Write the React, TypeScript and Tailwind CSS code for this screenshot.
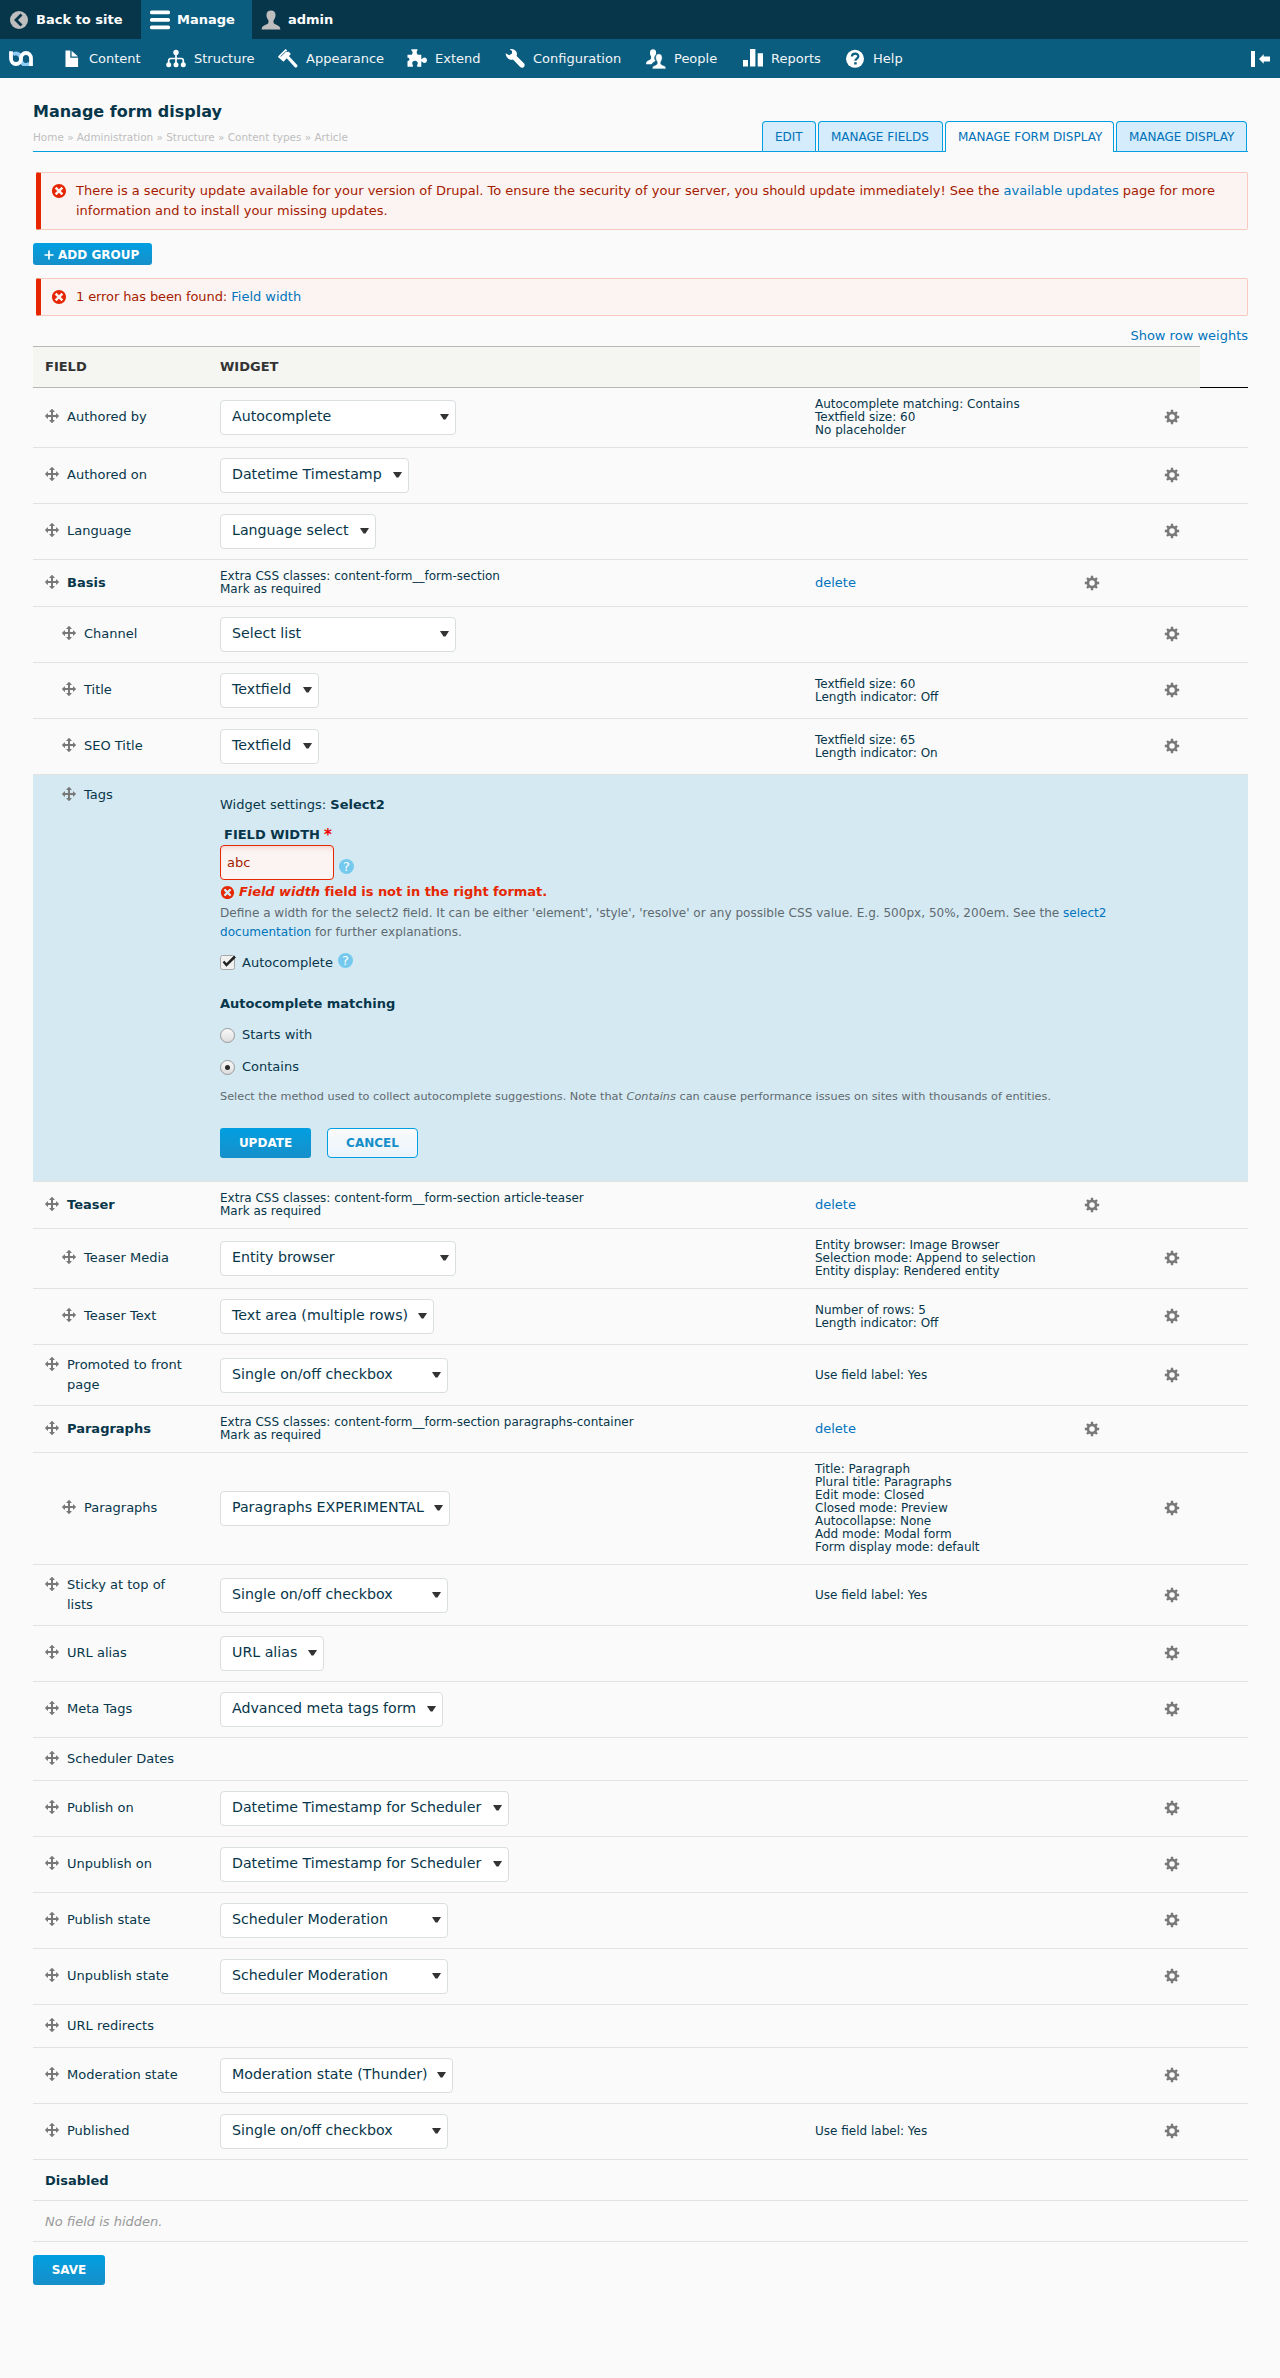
import React from "react";

const MOVE =
  "M14.904 7.753l-2.373-2.372c-.291-.292-.529-.193-.529.22v1.399h-3v-3h1.398c.414 0 .512-.239.221-.53l-2.371-2.372c-.137-.136-.36-.136-.497 0l-2.372 2.372c-.292.292-.193.53.22.53h1.399v3h-3v-1.369c0-.413-.239-.511-.53-.22l-2.372 2.372c-.136.136-.136.359 0 .494l2.372 2.372c.291.292.53.193.53-.221v-1.428h3v3h-1.4c-.413 0-.511.238-.22.529l2.374 2.373c.137.137.36.137.495 0l2.373-2.373c.29-.291.19-.529-.222-.529h-1.398v-3h3v1.4c0 .412.238.511.529.219l2.373-2.371c.137-.137.137-.359 0-.495z";
const ERR =
  "M8.002 1c-3.868 0-7.002 3.134-7.002 7s3.134 7 7.002 7c3.865 0 7-3.134 7-7s-3.135-7-7-7zm4.025 9.284c.062.063.1.149.1.239 0 .091-.037.177-.1.24l-1.262 1.262c-.064.062-.15.1-.24.1s-.176-.036-.24-.1l-2.283-2.283-2.286 2.283c-.064.062-.15.1-.24.1s-.176-.036-.24-.1l-1.261-1.262c-.063-.062-.1-.148-.1-.24 0-.088.036-.176.1-.238l2.283-2.285-2.283-2.284c-.063-.064-.1-.15-.1-.24s.036-.176.1-.24l1.262-1.262c.063-.063.149-.1.24-.1.089 0 .176.036.24.1l2.285 2.284 2.283-2.284c.064-.063.15-.1.24-.1s.176.036.24.1l1.262 1.262c.062.063.1.149.1.24 0 .089-.037.176-.1.24l-2.283 2.284 2.283 2.284z";

function Icon({ d, className }: { d: string; className: string }) {
  return (
    <svg viewBox="0 0 16 16" fill="currentColor" className={className}>
      <path d={d} />
    </svg>
  );
}

function Cog() {
  return (
    <svg viewBox="0 0 16 16" fill="none" stroke="currentColor" className="-mt-px block size-4 text-[#787878]">
      <circle cx="8" cy="8" r="4.1" strokeWidth="2.7" />
      <path
        d="M8 3.200V.8M8 12.800v2.400M3.200 8H.8M12.800 8h2.400M4.600 4.600 3 3M11.400 11.400 13 13M11.400 4.600 13 3M4.600 11.400 3 13"
        strokeWidth="2.400"
      />
    </svg>
  );
}

const menu: { label: string; w: string; icon: React.ReactNode }[] = [
  {
    label: "Content",
    w: "w-[105px]",
    icon: <path d="M4.500 1.400h4.800v7.300h7.800v9.200H4.500zM10.600 1.700l6.400 5.900h-6.400z" />,
  },
  {
    label: "Structure",
    w: "w-[112px]",
    icon: (
      <>
        <circle cx="10" cy="3.400" r="2.700" />
        <circle cx="2.700" cy="15.800" r="2.500" />
        <circle cx="10" cy="15.800" r="2.500" />
        <circle cx="17.300" cy="15.800" r="2.500" />
        <path d="M10 4v11M2.700 15v-3.500a2 2 0 0 1 2-2h10.600a2 2 0 0 1 2 2V15" fill="none" stroke="currentColor" strokeWidth="1.700" />
      </>
    ),
  },
  {
    label: "Appearance",
    w: "w-[129px]",
    icon: (
      <>
        <path d="M.2 7.200 7.600 0l1.600 1.400L7.800 3l3-.2 2.100 2.300-7.400 7.600-5.300-4.400z" />
        <path d="m9.200 7.500 8.600 9.400" stroke="currentColor" strokeWidth="3.200" strokeLinecap="round" />
        <path d="m2.600 7.600 5.200-5" stroke="#0b5d80" strokeWidth=".9" />
      </>
    ),
  },
  {
    label: "Extend",
    w: "w-[98px]",
    icon: (
      <path d="M4.400.2h6v1.400c-1 1-1 2.600.4 4.200h3.500v4.600c1.200-.4 1.600-1.800 3-1.800 1.600 0 2.700 1.200 2.700 2.700s-1.100 2.700-2.700 2.700c-1.400 0-1.800-1.300-3-1.700v5.500h-4.100c-.6-1.300.6-2.200.6-3.700 0-1.300-1.200-2.300-2.800-2.300s-2.800 1-2.800 2.300c0 1.500 1.200 2.400.6 3.700H.5V12c1 .2 1.900-.5 1.900-1.700S1.500 8.500.5 8.800V5.800h4.300C5.900 4.400 6 2.600 4.400 1.600z" />
    ),
  },
  {
    label: "Configuration",
    w: "w-[141px]",
    icon: (
      <path d="M.6 4.200 4.200 6.300 7 4.500V2L4.700.3c3-.7 6 .5 7 3.300.4 1.200.3 2.300-.1 3.300l7.300 7.300c1.200 1.200.9 3.100-.3 4-1 .8-2.400.7-3.400-.3L8 10.500c-3.500 1-7.200-1.700-7.400-6.300z" />
    ),
  },
  {
    label: "People",
    w: "w-[97px]",
    icon: (
      <>
        <path d="M4 3.200C4.200 1 5.300.2 7 .2s3 .8 3.100 3c.1 1.400-.2 2.600-1 3.500-1.400 1.200-1 4 .6 5.200-1.500.8-3.500 1.500-4 3.300H0c0-2.500 1.300-3.300 3-3.900 2.200-.8 2.600-2.900 1.700-4.600C4 5.700 3.900 4.500 4 3.200z" />
        <path
          d="M9.600 8.400c.1-2.400 1.200-3.600 3.200-3.600s3.300 1.200 3.400 3.600c.1 1.600-.3 2.800-1 3.900-.9 1.300-.5 3.200 1 3.700 2 .6 3.800 1 3.800 3.900H6.200c0-2.900 1.800-3.300 3.600-3.900 1.500-.5 1.800-2.500 1-3.700-.8-1.100-1.200-2.300-1.200-3.900z"
          stroke="#0b5d80"
          strokeWidth=".6"
        />
      </>
    ),
  },
  {
    label: "Reports",
    w: "w-[102px]",
    icon: <path d="M0 11h5v6.600H0zM7 0h5.400v17.600H7zM14.700 4.200H20v13.400h-5.300z" />,
  },
  {
    label: "Help",
    w: "w-[100px]",
    icon: (
      <>
        <circle cx="10" cy="9.800" r="9" />
        <path d="M6.900 7.500c.2-4 6.500-3.800 6.400-.1 0 2-2.900 2.300-2.900 4.300" fill="none" stroke="#0b5d80" strokeWidth="2.200" />
        <path d="M9.200 13.200h2.500v2.300H9.200z" fill="#0b5d80" />
      </>
    ),
  },
];

type Row = {
  label: string;
  h: string;
  group?: boolean;
  child?: boolean;
  select?: string;
  sw?: string;
  summary?: string[];
};

const before: Row[] = [
  { label: "Authored by", h: "h-[60px]", select: "Autocomplete", sw: "w-[236px]", summary: ["Autocomplete matching: Contains", "Textfield size: 60", "No placeholder"] },
  { label: "Authored on", h: "h-14", select: "Datetime Timestamp", sw: "w-[189px]" },
  { label: "Language", h: "h-14", select: "Language select", sw: "w-[156px]" },
  { label: "Basis", h: "h-[47px]", group: true, summary: ["Extra CSS classes: content-form__form-section", "Mark as required"] },
  { label: "Channel", h: "h-14", child: true, select: "Select list", sw: "w-[236px]" },
  { label: "Title", h: "h-14", child: true, select: "Textfield", sw: "w-[99px]", summary: ["Textfield size: 60", "Length indicator: Off"] },
  { label: "SEO Title", h: "h-14", child: true, select: "Textfield", sw: "w-[99px]", summary: ["Textfield size: 65", "Length indicator: On"] },
];

const after: Row[] = [
  { label: "Teaser", h: "h-[47px]", group: true, summary: ["Extra CSS classes: content-form__form-section article-teaser", "Mark as required"] },
  { label: "Teaser Media", h: "h-[60px]", child: true, select: "Entity browser", sw: "w-[236px]", summary: ["Entity browser: Image Browser", "Selection mode: Append to selection", "Entity display: Rendered entity"] },
  { label: "Teaser Text", h: "h-14", child: true, select: "Text area (multiple rows)", sw: "w-[214px]", summary: ["Number of rows: 5", "Length indicator: Off"] },
  { label: "Promoted to front page", h: "h-[61px]", select: "Single on/off checkbox", sw: "w-[228px]", summary: ["Use field label: Yes"] },
  { label: "Paragraphs", h: "h-[47px]", group: true, summary: ["Extra CSS classes: content-form__form-section paragraphs-container", "Mark as required"] },
  { label: "Paragraphs", h: "h-28", child: true, select: "Paragraphs EXPERIMENTAL", sw: "w-[230px]", summary: ["Title: Paragraph", "Plural title: Paragraphs", "Edit mode: Closed", "Closed mode: Preview", "Autocollapse: None", "Add mode: Modal form", "Form display mode: default"] },
  { label: "Sticky at top of lists", h: "h-[61px]", select: "Single on/off checkbox", sw: "w-[228px]", summary: ["Use field label: Yes"] },
  { label: "URL alias", h: "h-14", select: "URL alias", sw: "w-[104px]" },
  { label: "Meta Tags", h: "h-14", select: "Advanced meta tags form", sw: "w-[223px]" },
  { label: "Scheduler Dates", h: "h-[43px]" },
  { label: "Publish on", h: "h-14", select: "Datetime Timestamp for Scheduler", sw: "w-[289px]" },
  { label: "Unpublish on", h: "h-14", select: "Datetime Timestamp for Scheduler", sw: "w-[289px]" },
  { label: "Publish state", h: "h-14", select: "Scheduler Moderation", sw: "w-[228px]" },
  { label: "Unpublish state", h: "h-14", select: "Scheduler Moderation", sw: "w-[228px]" },
  { label: "URL redirects", h: "h-[43px]" },
  { label: "Moderation state", h: "h-14", select: "Moderation state (Thunder)", sw: "w-[233px]" },
  { label: "Published", h: "h-14", select: "Single on/off checkbox", sw: "w-[228px]", summary: ["Use field label: Yes"] },
];

function Handle({ row }: { row: Pick<Row, "label" | "group" | "child" | "select"> }) {
  return (
    <div className={"flex w-[187px] items-start pr-3 " + (row.child ? "pl-7 " : "pl-[11px] ") + (row.select ? "-mt-px" : "")}>
      <Icon d={MOVE} className="mt-px mr-[7px] block size-4 shrink-0 text-[#787878]" />
      <span className={row.group ? "w-[125px] leading-5 font-bold" : "w-[125px] leading-5"}>{row.label}</span>
    </div>
  );
}

function Lines({ items }: { items: string[] }) {
  return (
    <div className="text-xs leading-[13px] whitespace-nowrap">
      {items.map((t) => (
        <div key={t}>{t}</div>
      ))}
    </div>
  );
}

function FieldRow({ row }: { row: Row }) {
  return (
    <div className={"flex items-center border-b border-[#e2e2de] " + row.h}>
      <Handle row={row} />
      <div className="w-[595px]">
        {row.select && (
          <div className={"flex h-[35px] items-center justify-between rounded-[4px] border border-[#d9dee1] bg-white pr-1.5 pl-[11px] text-[14.2px] " + row.sw}>
            <span className="-mt-px whitespace-nowrap">{row.select}</span>
            <svg viewBox="0 0 9 6" className="-mt-px block h-1.5 w-[9px] shrink-0">
              <path d="M0 0h9L5.500 5.500h-2z" fill="#333" />
            </svg>
          </div>
        )}
        {row.group && row.summary && <Lines items={row.summary} />}
      </div>
      <div className={row.group ? "w-[269px]" : "w-[349px]"}>
        {row.group ? <a className="text-[#0074bd]">delete</a> : row.summary && <Lines items={row.summary} />}
      </div>
      {(row.group || row.select) && <Cog />}
    </div>
  );
}

function Message({ h, children }: { h: string; children: React.ReactNode }) {
  return (
    <div className={"ml-[3px] flex rounded-[2px] border border-l-[5px] border-[#f9c9bf] border-l-[#e62600] bg-[#fcf4f2] pt-2 text-[#a51b00] " + h}>
      <Icon d={ERR} className="mt-[2px] ml-[10px] block size-4 shrink-0 text-[#e62600]" />
      <div className="ml-[9px] leading-5">{children}</div>
    </div>
  );
}

function HelpDot() {
  return (
    <span className="flex size-[15px] items-center justify-center rounded-full bg-[#75c9ee] text-[13px] leading-none text-white">?</span>
  );
}

function Radio({ label, on }: { label: string; on?: boolean }) {
  return (
    <div className="flex h-8 items-center">
      <span className="mr-[7px] flex size-[15px] items-center justify-center rounded-full border border-[#9a9a9a] bg-linear-to-b from-[#fafafa] to-[#dddddd]">
        {on && <span className="size-[5px] rounded-full bg-[#2b2b2b]" />}
      </span>
      {label}
    </div>
  );
}

const tabBase = "flex items-center rounded-t-[4px] border border-b-0 border-[#009fe1] text-xs text-[#0071b8] pl-[12px] whitespace-nowrap ";

export default function App() {
  return (
    <div className="h-[2378px] w-[1280px] bg-[#fafafa] font-['DejaVu_Sans',sans-serif] text-[13px] text-[#07364a]">
      <div className="flex h-[39px] bg-[#07364a] font-bold text-white">
        <div className="flex w-[141px] items-center pl-[9px]">
          <svg viewBox="0 0 20 20" className="mr-[7px] block size-5">
            <circle cx="10" cy="10" r="9" fill="#bebebe" />
            <path d="M12.500 4.500 7 10l5.500 5.500" stroke="#07364a" strokeWidth="2.800" fill="none" />
          </svg>
          Back to site
        </div>
        <div className="flex w-[111px] items-center bg-[#0b5d80] pl-[9px]">
          <svg viewBox="0 0 20 20" className="mr-[7px] block size-5" fill="#fff">
            <rect y=".500" width="20" height="3.700" rx="1.500" />
            <rect y="8.100" width="20" height="3.700" rx="1.500" />
            <rect y="15.600" width="20" height="3.700" rx="1.500" />
          </svg>
          Manage
        </div>
        <div className="flex items-center pl-[9px]">
          <svg viewBox="0 0 20 20" className="mr-[7px] block size-5" fill="#bebebe">
            <path d="M5.500 4.500C5.700 1.600 7.300.500 10 .500s4.300 1.100 4.500 4c.1 2-.4 3.600-1.400 5-1.200 1.700-.8 4 .9 4.700 2.500 1 5.300 1.600 5.300 5.300H.700c0-3.700 2.800-4.300 5.300-5.300 1.700-.7 2.100-3 .9-4.700-1-1.400-1.500-3-1.400-5z" />
          </svg>
          admin
        </div>
      </div>

      <div className="flex h-[39px] items-center bg-[#0b5d80] text-[#f2f6f8]">
        <div className="w-[61px] pl-[9px]">
          <svg viewBox="0 0 24 15" className="block h-[15px] w-6" fill="none" strokeWidth="3.800">
            <path d="M4 3.600A5 5.500 0 0 1 12 7.500" stroke="#8fcbf3" />
            <path d="M12 7.500A5 5.500 0 0 0 20.500 12.300" stroke="#8fcbf3" />
            <path d="M2 .2V7.500A5 5.500 0 0 0 12 7.500A5 5.500 0 0 1 22 7.500V15" stroke="#fff" />
          </svg>
        </div>
        {menu.map((m) => (
          <div key={m.label} className={"flex shrink-0 items-center " + m.w}>
            <svg viewBox="0 0 20 20" fill="currentColor" className="mr-2 block size-5 text-white">
              {m.icon}
            </svg>
            {m.label}
          </div>
        ))}
        <svg viewBox="0 0 20 16" className="mr-2.5 ml-auto block h-4 w-5" fill="#fff">
          <path d="M1 0h4v16H1zM9 8l4.700-4.700v2.200H20v5h-6.300v2.200z" />
        </svg>
      </div>

      <div className="pr-8 pl-[33px]">
        <div className="flex h-[74px] justify-between border-b border-[#009fe1]">
          <div className="pt-[22px]">
            <h1 className="text-base leading-6 font-bold">Manage form display</h1>
            <div className="mt-[5px] text-[10.45px] leading-4 text-[#bebebe]">
              Home » Administration » Structure » Content types » Article
            </div>
          </div>
          <div className="flex items-end gap-0.5">
            <div className={tabBase + "h-[30px] w-[54px] bg-[#d4ecfb]"}>EDIT</div>
            <div className={tabBase + "h-[30px] w-[125px] bg-[#d4ecfb]"}>MANAGE FIELDS</div>
            <div className={tabBase + "-mb-px h-[31px] w-[169px] bg-[#fafafa]"}>MANAGE FORM DISPLAY</div>
            <div className={tabBase + "mr-px h-[30px] w-[131px] bg-[#d4ecfb]"}>MANAGE DISPLAY</div>
          </div>
        </div>

        <div className="h-5" />
        <Message h="h-[58px]">
          <span className="tracking-[-0.01px]">
            There is a security update available for your version of Drupal. To ensure the security of your server, you should update immediately! See the{" "}
            <a className="text-[#0074bd]">available updates</a> page for more information and to install your missing updates.
          </span>
        </Message>

        <button className="mt-[13px] flex h-[22px] w-[119px] items-center rounded-[3px] bg-linear-to-b from-[#009fe1] to-[#158fc9] pt-px pl-[11px] text-xs font-bold whitespace-nowrap text-white">
          <svg viewBox="0 0 10 10" className="mr-[4px] block size-[10px]">
            <path d="M5 .500v9M.500 5h9" stroke="#fff" strokeWidth="1.700" />
          </svg>
          ADD GROUP
        </button>

        <div className="h-[13px]" />
        <Message h="h-[38px]">
          <span className="tracking-[-0.1px]">1 error has been found:</span> <a className="text-[#0074bd]">Field width</a>
        </Message>

        <div className="flex h-[30px] items-start justify-end pt-[10px] leading-5 text-[#0074bd]">Show row weights</div>

        <div className="flex h-[42px] font-bold text-[#333]">
          <div className="flex w-[1167px] items-center border-y border-[#b8b9b4] bg-[#f5f5f2] pl-3">
            <span className="w-[175px]">FIELD</span>
            <span>WIDGET</span>
          </div>
          <div className="flex-1 border-b border-black" />
        </div>

        {before.map((r) => (
          <FieldRow key={r.label} row={r} />
        ))}

        <div className="flex h-[407px] border-b border-[#e2e2de] bg-[#d5e9f2]">
          <div className="pt-[10px]">
            <Handle row={{ label: "Tags", child: true }} />
          </div>
          <div className="w-[895px] pt-[20px]">
            <div className="leading-5">
              Widget settings: <b>Select2</b>
            </div>
            <div className="mt-[10px] flex h-5 pl-1 leading-5 font-bold">
              FIELD WIDTH<span className="ml-1 text-[15px] leading-5 text-[#ee0000]">*</span>
            </div>
            <div className="flex items-end">
              <div className="flex h-[35px] w-[114px] items-center rounded-[4px] border border-[#e62600] bg-[#fcf4f2] pl-[6px] text-[#a51b00] shadow-[inset_0_5px_5px_-3px_rgba(165,27,0,0.15)]">
                abc
              </div>
              <div className="mb-[6px] ml-[5px]">
                <HelpDot />
              </div>
            </div>
            <div className="mt-[2px] flex h-5 items-center leading-5 font-bold text-[#e62600]">
              <Icon d={ERR} className="mt-px mr-[4px] block size-[15px]" />
              <span className="tracking-[-0.06px]">
                <em>Field width</em> field is not in the right format.
              </span>
            </div>
            <div className="mt-[2px] text-[12.05px] leading-[19px] text-[#5f6a70]">
              Define a width for the select2 field. It can be either 'element', 'style', 'resolve' or any possible CSS value. E.g. 500px, 50%, 200em. See the{" "}
              <a className="text-[#0074bd]">select2 documentation</a> for further explanations.
            </div>
            <div className="mt-2.5 flex h-5 items-center">
              <svg viewBox="0 0 16 16" className="mr-[6px] block size-4">
                <rect x=".500" y="1.500" width="14" height="14" rx="2" fill="#f0f0f0" stroke="#a6a6a6" />
                <path d="m3.500 7.500 3 3.500 8.500-8.500" fill="none" stroke="#222" strokeWidth="2.500" />
              </svg>
              <span className="pt-px">Autocomplete</span>
              <span className="-mt-[3px] ml-[5px]">
                <HelpDot />
              </span>
            </div>
            <div className="mt-[22px] leading-5 font-bold">Autocomplete matching</div>
            <div className="mt-[5px]">
              <Radio label="Starts with" />
              <Radio label="Contains" on />
            </div>
            <div className="mt-[5px] text-[11.27px] leading-[18px] text-[#5f6a70]">
              Select the method used to collect autocomplete suggestions. Note that <em>Contains</em> can cause performance issues on sites with thousands of entities.
            </div>
            <div className="mt-[22px] flex gap-4 text-xs font-bold">
              <button className="h-[30px] w-[91px] rounded-[3px] bg-linear-to-b from-[#009fe1] to-[#158fc9] text-white">UPDATE</button>
              <button className="h-[30px] w-[91px] rounded-[4px] border border-[#009fe1] bg-linear-to-b from-[#fafafa] to-[#eaf4fd] text-[#158fc9]">CANCEL</button>
            </div>
          </div>
        </div>

        {after.map((r, i) => (
          <FieldRow key={i} row={r} />
        ))}

        <div className="flex h-[41px] items-center border-b border-[#e2e2de] pt-px pl-3 font-bold">Disabled</div>
        <div className="flex h-[41px] items-center border-b border-[#e2e2de] pt-px pl-3 text-[#999] italic">No field is hidden.</div>

        <button className="mt-[13px] h-[30px] w-[72px] rounded-[3px] bg-linear-to-b from-[#009fe1] to-[#158fc9] text-xs font-bold text-white">SAVE</button>
      </div>
    </div>
  );
}
